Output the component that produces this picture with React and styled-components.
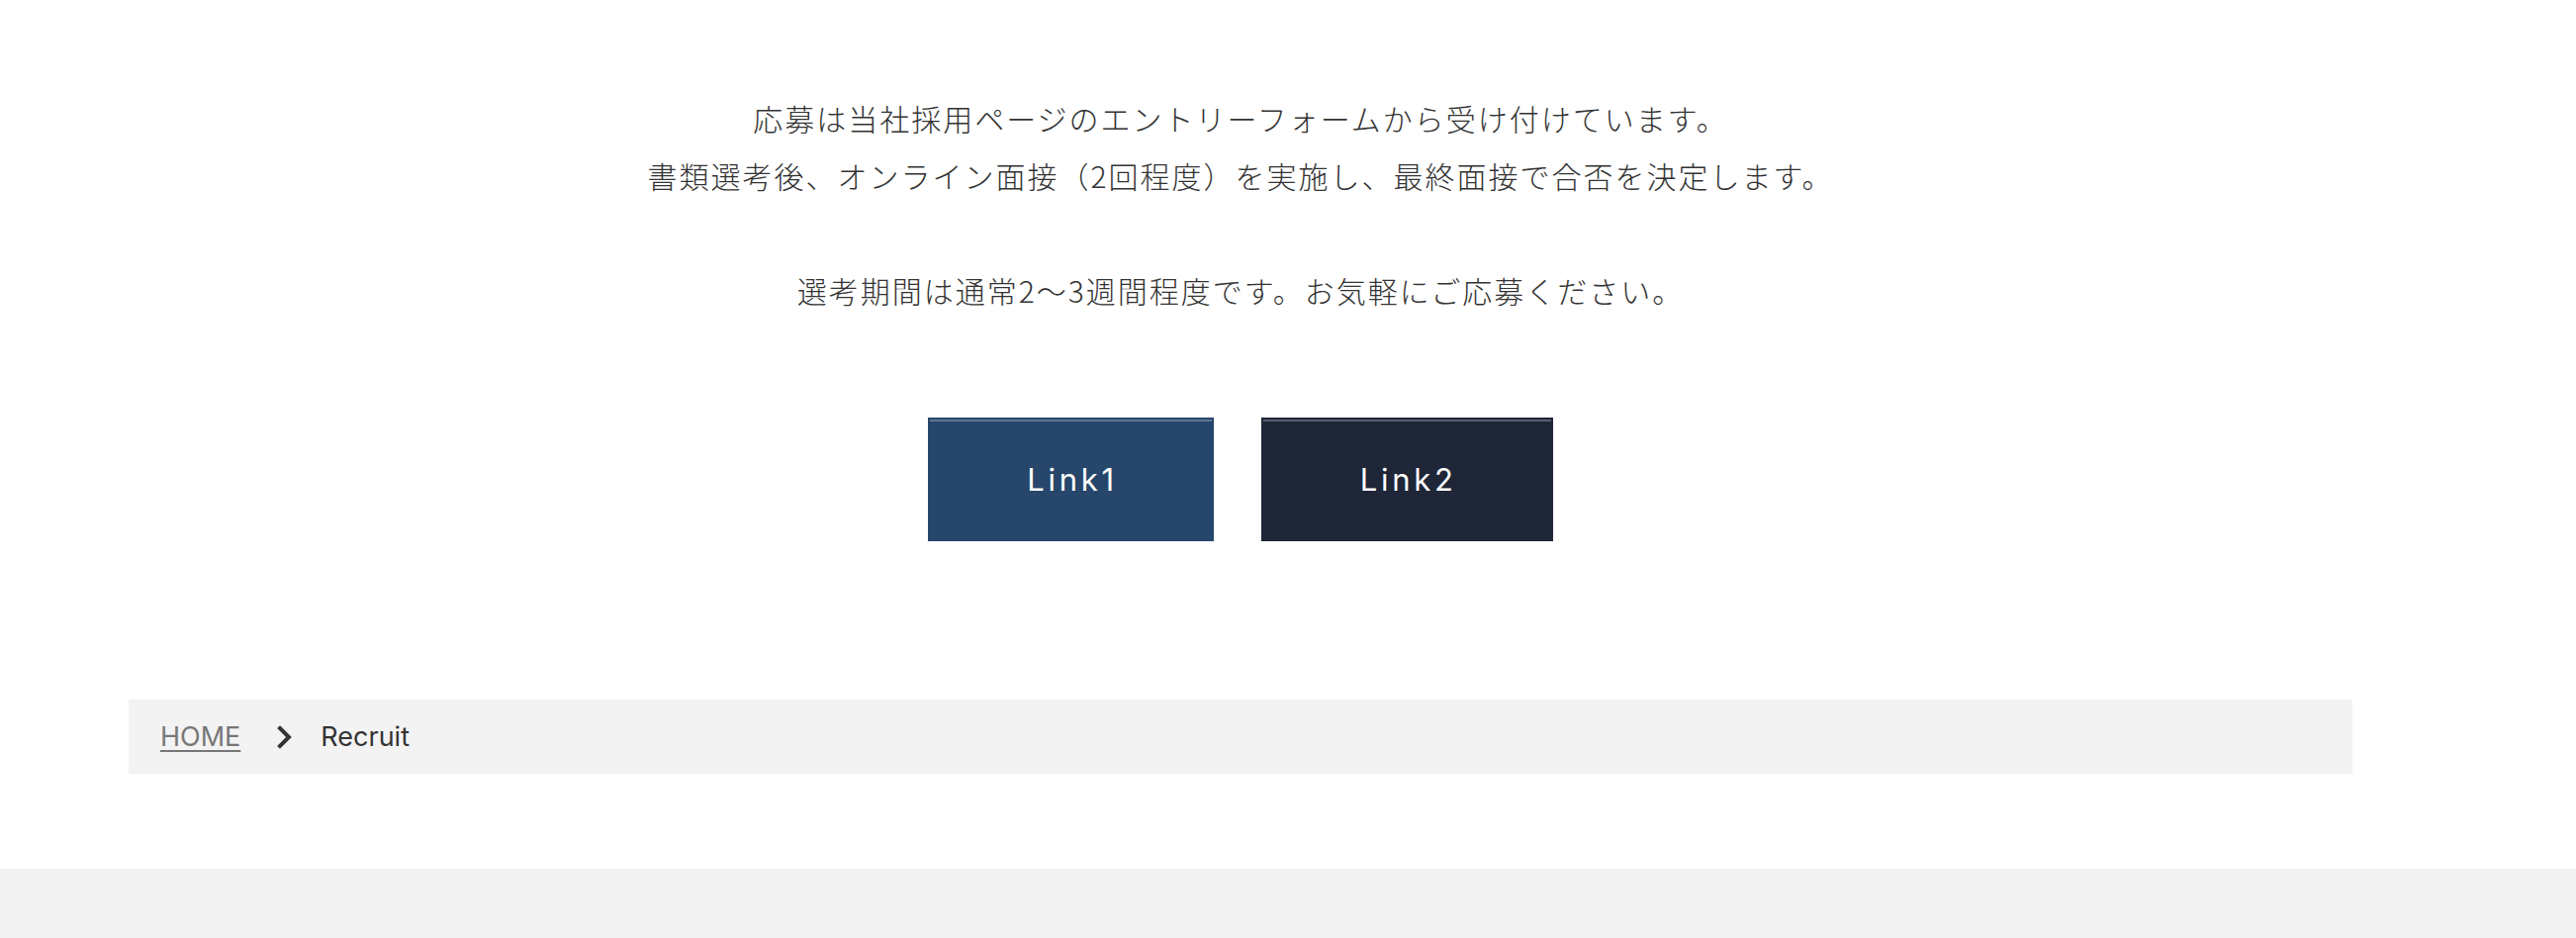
import React from "react";
import styled, { createGlobalStyle } from "styled-components";

const GlobalStyle = createGlobalStyle`
  html, body {
    margin: 0;
    padding: 0;
    background: #ffffff;
  }
  body {
    font-family: "Inter", "Noto Sans CJK JP", sans-serif;
    color: #333333;
  }
  * { box-sizing: border-box; }
`;

const Page = styled.div`
  display: flex;
  flex-direction: column;
  min-height: 948px;
`;

const Main = styled.main`
  width: 2248px;
  margin-left: 130px;
  padding-top: 90px;
  display: flex;
  flex-direction: column;
`;

const Message = styled.div`
  text-align: center;
  font-family: "Noto Sans CJK JP", "Inter", sans-serif;
  font-size: 30px;
  font-weight: 300;
  line-height: 58px;
  letter-spacing: 2px;
  color: #333333;
`;

const Paragraph = styled.p`
  margin: 0 0 ${(p) => (p.$last ? "0" : "58px")};
`;

const ButtonRow = styled.div`
  display: flex;
  justify-content: center;
  gap: 48px;
  margin-top: 100px;
`;

const LinkButton = styled.a`
  position: relative;
  display: flex;
  align-items: center;
  justify-content: center;
  height: 125px;
  padding: 0 97px 0 100px;
  background: ${(p) => p.$bg};
  color: #ffffff;
  font-family: "Inter", sans-serif;
  font-size: 31px;
  font-weight: 400;
  letter-spacing: 0.12em;
  text-decoration: none;

  &::before {
    content: "";
    position: absolute;
    top: 2px;
    left: 2px;
    right: 2px;
    height: 2px;
    background: rgba(255, 255, 255, 0.26);
  }
`;

const Breadcrumb = styled.nav`
  margin-top: 160px;
  height: 75px;
  background: #f3f3f3;
  display: flex;
  align-items: center;
  padding-left: 32px;
  font-family: "Inter", sans-serif;
  font-size: 27px;
`;

const CrumbLink = styled.a`
  color: #777777;
  text-decoration: underline;
  text-underline-offset: 4px;
  text-decoration-thickness: 2px;
`;

const Separator = styled.span`
  display: flex;
  align-items: center;
  margin: 0 28px 0 37px;
`;

const Current = styled.span`
  color: #333333;
`;

const Footer = styled.footer`
  margin-top: 96px;
  flex: 1;
  min-height: 71px;
  background: #f3f3f3;
`;

const Chevron = () => (
  <svg width="16" height="24" viewBox="0 0 16 24" aria-hidden="true">
    <path
      d="M3 3 L12 12 L3 21"
      fill="none"
      stroke="#333333"
      strokeWidth="4"
      strokeLinecap="square"
      strokeLinejoin="miter"
    />
  </svg>
);

export default function App() {
  return (
    <>
      <GlobalStyle />
      <Page>
        <Main>
          <Message>
            <Paragraph>
              応募は当社採用ページのエントリーフォームから受け付けています。
              <br />
              書類選考後、オンライン面接（2回程度）を実施し、最終面接で合否を決定します。
            </Paragraph>
            <Paragraph $last>
              選考期間は通常2〜3週間程度です。お気軽にご応募ください。
            </Paragraph>
          </Message>
          <ButtonRow>
            <LinkButton href="#" $bg="#27466b">Link1</LinkButton>
            <LinkButton href="#" $bg="#1e2638">Link2</LinkButton>
          </ButtonRow>
          <Breadcrumb>
            <CrumbLink href="#">HOME</CrumbLink>
            <Separator>
              <Chevron />
            </Separator>
            <Current>Recruit</Current>
          </Breadcrumb>
        </Main>
        <Footer />
      </Page>
    </>
  );
}
